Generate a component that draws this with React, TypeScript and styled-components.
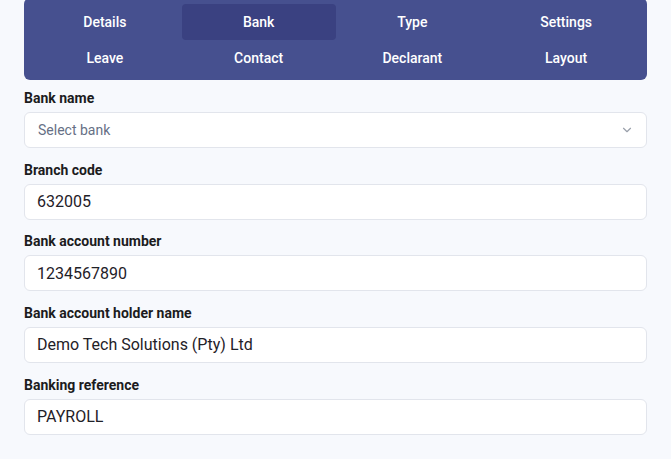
import React from "react";
import styled, { createGlobalStyle } from "styled-components";

const Global = createGlobalStyle`
  html, body { margin: 0; padding: 0; background: #f7f9fd; }
  body { font-family: Roboto, "Noto Sans", Arial, sans-serif; }
  * { box-sizing: border-box; }
`;

const Page = styled.div`
  padding: 0 24px 24px;
  display: flex;
  flex-direction: column;
`;

const TabPanel = styled.div`
  margin-top: -2px;
  background: #46508f;
  border-radius: 6px;
  padding: 6px 4px 4px;
  display: grid;
  grid-template-columns: repeat(4, 1fr);
  grid-auto-rows: 36px;
`;

const Tab = styled.button<{ $active?: boolean }>`
  border: none;
  background: ${(p) => (p.$active ? "#3a4181" : "transparent")};
  border-radius: 4px;
  color: #ffffff;
  font-family: Roboto, Arial, sans-serif;
  font-weight: 500;
  font-size: 14px;
  cursor: pointer;
  padding: 0;
`;

const Form = styled.div`
  margin-top: 8px;
  display: flex;
  flex-direction: column;
  gap: 11.67px;
`;

const Field = styled.div`
  display: flex;
  flex-direction: column;
  gap: 4px;
`;

const Label = styled.label`
  font-size: 14px;
  font-weight: 700;
  line-height: 20px;
  color: #1c1c1e;
`;

const Input = styled.div`
  height: 36px;
  background: #ffffff;
  border: 1px solid #e2e5ec;
  border-radius: 6px;
  padding: 0 12px;
  display: flex;
  align-items: center;
  justify-content: space-between;
  font-size: 16px;
  color: #1f2128;
`;

const Placeholder = styled.span`
  font-size: 14px;
  color: #667085;
  padding-left: 1px;
`;

const Chevron = () => (
  <svg width="14" height="14" viewBox="0 0 24 24" fill="none" stroke="#9aa0ab" strokeWidth="2" strokeLinecap="round" strokeLinejoin="round">
    <path d="M6 9l6 6 6-6" />
  </svg>
);

const tabs = ["Details", "Bank", "Type", "Settings", "Leave", "Contact", "Declarant", "Layout"];

const fields = [
  { label: "Branch code", value: "632005" },
  { label: "Bank account number", value: "1234567890" },
  { label: "Bank account holder name", value: "Demo Tech Solutions (Pty) Ltd" },
  { label: "Banking reference", value: "PAYROLL" },
];

export default function App() {
  return (
    <>
      <Global />
      <Page>
        <TabPanel>
          {tabs.map((t) => (
            <Tab key={t} $active={t === "Bank"}>
              {t}
            </Tab>
          ))}
        </TabPanel>
        <Form>
          <Field>
            <Label>Bank name</Label>
            <Input>
              <Placeholder>Select bank</Placeholder>
              <Chevron />
            </Input>
          </Field>
          {fields.map((f) => (
            <Field key={f.label}>
              <Label>{f.label}</Label>
              <Input>{f.value}</Input>
            </Field>
          ))}
        </Form>
      </Page>
    </>
  );
}
